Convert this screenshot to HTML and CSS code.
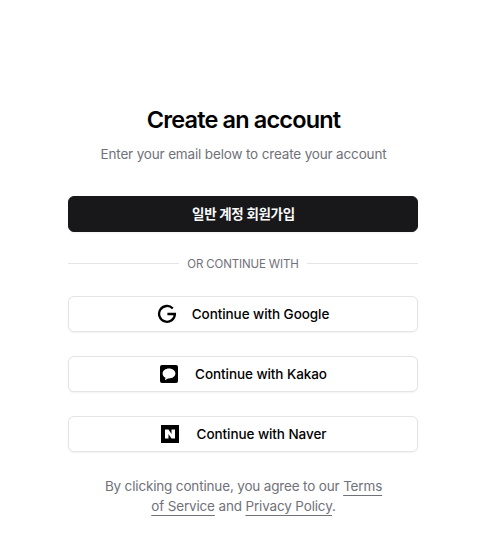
FILE: index.html
```html
<!DOCTYPE html>
<html lang="ko">
<head>
<meta charset="utf-8">
<title>Create an account</title>
<link rel="stylesheet" href="styles.css">
</head>
<body>
<main class="signup">
  <header class="intro">
    <h1>Create an account</h1>
    <p>Enter your email below to create your account</p>
  </header>
  <a class="button primary">일반 계정 회원가입</a>
  <div class="divider"><span>OR CONTINUE WITH</span></div>
  <div class="providers">
    <button class="button google"><svg class="icon" viewBox="0 0 20 20"><path d="M15.800 4.500A7.900 7.900 0 1 0 17.900 10H10.400" fill="none" stroke="currentColor" stroke-width="2.300"/></svg>Continue with Google</button>
    <button class="button kakao"><svg class="icon" viewBox="0 0 20 20"><path fill-rule="evenodd" d="M3 1h14q2 0 2 2v14q0 2-2 2H3q-2 0-2-2V3q0-2 2-2zM10 4.500c-3.600 0-6.400 2.200-6.400 5 0 1.800 1.100 3.300 2.900 4.200L5.900 16.300l3-1.900c3.900.4 7.500-1.700 7.500-4.900 0-2.800-2.800-5-6.400-5z"/></svg>Continue with Kakao</button>
    <button class="button naver"><svg class="icon" viewBox="0 0 20 20"><path fill-rule="evenodd" d="M1 1h18v18H1zM5 5.500v9h3.500V10l3 4.500H15v-9h-3.500V10l-3-4.500z"/></svg>Continue with Naver</button>
  </div>
  <p class="terms">By clicking continue, you agree to our <a>Terms of Service</a> and <a>Privacy Policy</a>.</p>
</main>
</body>
</html>
```
FILE: styles.css
```css
* { box-sizing: border-box; margin: 0; }
body { background: #fff; color: #09090b; font-family: Inter, "Noto Sans CJK KR", sans-serif; font-size: 14px; line-height: 20px; }
.signup { width: 350px; margin: 104px 0 0 68px; display: flex; flex-direction: column; gap: 24px; }
.intro { display: flex; flex-direction: column; gap: 8px; text-align: center; margin-bottom: 8px; }
h1 { padding-left: 1px; font-size: 23.5px; line-height: 32px; font-weight: 600; letter-spacing: -0.84px; color: #000; }
.intro p, .terms { color: #71717a; font-size: 13.5px; letter-spacing: -0.16px; }
.intro p { padding-left: 1px; }
.button { height: 36px; width: 100%; display: flex; align-items: center; justify-content: center; border: 1px solid #e4e4e7; border-radius: 6px; background: #fff; color: #000; font: 500 13.5px/20px Inter, "Noto Sans CJK KR", sans-serif; letter-spacing: -0.07px; box-shadow: 0 1px 2px rgb(0 0 0 / 5%); }
.primary { padding-left: 1px; background: #18181b; border-color: #18181b; color: #fafafa; font-weight: 700; letter-spacing: -0.3px; }
.divider { display: flex; align-items: center; gap: 8px; color: #71717a; font-size: 11.5px; line-height: 16px; letter-spacing: -0.14px; }
.divider::before, .divider::after { content: ""; flex: 1; height: 1px; margin-bottom: 1px; background: #e4e4e7; }
.providers { display: flex; flex-direction: column; gap: 24px; }
.icon { width: 20px; height: 20px; margin-right: 15px; fill: currentColor; }
.kakao .icon { margin-right: 16px; }
.naver .icon { margin-right: 17px; }
.terms { padding: 0 31px 0 32px; text-align: center; }
.terms a { text-decoration: underline; text-underline-offset: 4px; }
```
